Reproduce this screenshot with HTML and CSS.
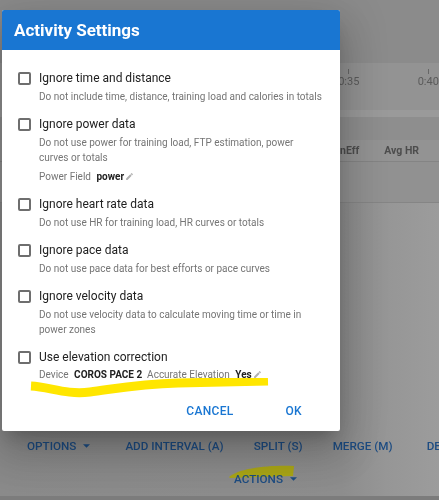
FILE: index.html
```html
<!DOCTYPE html>
<html lang="en">
<head>
<meta charset="utf-8">
<title>Activity Settings</title>
<link rel="stylesheet" href="styles.css">
</head>
<body>
<div class="page">
  <div class="top-strip"></div>
  <div class="axis">
    <div class="tick"><span class="tick-mark"></span><span>0:35</span></div>
    <div class="tick"><span class="tick-mark"></span><span>0:40</span></div>
  </div>
  <div class="band"></div>
  <div class="gap-row"></div>
  <div class="table-head"><span>nEff</span><span>Avg HR</span></div>
  <div class="table-row"></div>
  <div class="lower"></div>
  <div class="bottom-line"></div>
</div>

<svg class="marker marker-b" width="70" height="18" viewBox="0 0 70 18"><path d="M1 14 C 12 5, 40 2, 66 3 L 65 13 L 2 15 Z"/></svg>

<div class="toolbar">
  <span class="tbtn first">OPTIONS <svg class="caret" viewBox="7 10 10 5"><path d="M7 10l5 5 5-5z"/></svg></span>
  <span class="tbtn">ADD INTERVAL (A)</span>
  <span class="tbtn">SPLIT (S)</span>
  <span class="tbtn">MERGE (M)</span>
  <span class="tbtn lastbtn">DELETE</span>
</div>
<div class="toolbar2">
  <span class="tbtn">ACTIONS <svg class="caret" viewBox="7 10 10 5"><path d="M7 10l5 5 5-5z"/></svg></span>
</div>

<div class="dialog">
  <div class="dialog-title">Activity Settings</div>
  <div class="dialog-body">
    <div class="opt">
      <span class="box"></span>
      <div class="txt">
        <div class="label">Ignore time and distance</div>
        <div class="desc">Do not include time, distance, training load and calories in totals</div>
      </div>
    </div>
    <div class="opt">
      <span class="box"></span>
      <div class="txt">
        <div class="label">Ignore power data</div>
        <div class="desc">Do not use power for training load, FTP estimation, power curves or totals</div>
        <div class="field">Power Field <b>power</b><svg class="pencil" viewBox="0 0 24 24"><path d="M20.71 7.04c.39-.39.39-1.04 0-1.41l-2.34-2.34c-.37-.39-1.02-.39-1.41 0l-1.84 1.83 3.75 3.75M3 17.25V21h3.75L17.81 9.93l-3.75-3.75L3 17.25z"/></svg></div>
      </div>
    </div>
    <div class="opt">
      <span class="box"></span>
      <div class="txt">
        <div class="label">Ignore heart rate data</div>
        <div class="desc">Do not use HR for training load, HR curves or totals</div>
      </div>
    </div>
    <div class="opt">
      <span class="box"></span>
      <div class="txt">
        <div class="label">Ignore pace data</div>
        <div class="desc">Do not use pace data for best efforts or pace curves</div>
      </div>
    </div>
    <div class="opt">
      <span class="box"></span>
      <div class="txt">
        <div class="label">Ignore velocity data</div>
        <div class="desc">Do not use velocity data to calculate moving time or time in power zones</div>
      </div>
    </div>
    <div class="opt last">
      <span class="box"></span>
      <div class="txt">
        <div class="label">Use elevation correction</div>
        <div class="field tight">Device <b>COROS PACE 2</b> &nbsp;Accurate Elevation <b>Yes</b><svg class="pencil" viewBox="0 0 24 24"><path d="M20.71 7.04c.39-.39.39-1.04 0-1.41l-2.34-2.34c-.37-.39-1.02-.39-1.41 0l-1.84 1.83 3.75 3.75M3 17.25V21h3.75L17.81 9.93l-3.75-3.75L3 17.25z"/></svg></div>
      </div>
    </div>
  </div>
  <div class="actions">
    <span class="abtn">CANCEL</span>
    <span class="abtn">OK</span>
  </div>
</div>

<svg class="marker marker-a" width="250" height="24" viewBox="0 0 250 24"><path d="M3 8 C 22 9, 38 17, 62 14 S 110 6, 150 5 L 240 3"/></svg>
</body>
</html>
```
FILE: styles.css
```css
* { box-sizing: border-box; }
html, body { margin: 0; padding: 0; }
body {
  width: 439px;
  height: 500px;
  overflow: hidden;
  font-family: Roboto, "Liberation Sans", Arial, sans-serif;
  background: #8f8f8f;
  position: relative;
}
.page { display: flex; flex-direction: column; height: 500px; }
.top-strip { height: 63px; background: #8b8b8b; }
.axis {
  height: 47px;
  background: #939393;
  display: flex;
  padding-left: 338px;
  gap: 58px;
  font-size: 11px;
  color: #5b5b5b;
}
.tick { display: flex; flex-direction: column; align-items: center; width: 22px; padding-top: 6px; }
.tick-mark { width: 1px; height: 5px; background: #666; margin-bottom: 1px; }
.band { height: 7px; background: #9a9a9a; }
.gap-row { height: 23px; background: #8e8e8e; }
.table-head {
  height: 22px;
  background: #939393;
  border-bottom: 1px solid #848484;
  display: flex;
  align-items: center;
  padding-left: 340px;
  gap: 25px;
  font-size: 10.5px;
  font-weight: 700;
  color: #4d4d4d;
}
.table-row { height: 41px; background: #919191; border-bottom: 1px solid #858585; }
.lower {
  flex: 1;
  background: linear-gradient(to right, #8a8a8a 0%, #8d8d8d 78%, #969696 88%, #9c9c9c 100%);
}
.bottom-line { height: 4px; background: #7c7c7c; }

.toolbar {
  position: absolute;
  left: 0; width: 439px; top: 437px;
  display: flex;
  align-items: center;
  padding-left: 27px;
  gap: 30px;
  white-space: nowrap;
  overflow: hidden;
}
.toolbar2 {
  position: absolute;
  left: 234px; top: 468px;
}
.tbtn {
  flex: none;
  font-size: 11.7px;
  font-weight: 500;
  color: #1d4c82;
  display: inline-flex;
  align-items: center;
  height: 18px;
}
.tbtn.first { margin-right: 5px; }
.tbtn.lastbtn { margin-left: 4px; }
.caret { width: 7px; height: 4px; margin-left: 7px; fill: #1d4c82; }

.dialog {
  position: absolute;
  left: 2px; top: 10px;
  width: 338px;
  height: 421px;
  background: #fff;
  border-radius: 2px;
  box-shadow: 0 11px 15px -7px rgba(0,0,0,.2), 0 24px 38px 3px rgba(0,0,0,.14), 0 9px 46px 8px rgba(0,0,0,.12);
  display: flex;
  flex-direction: column;
}
.dialog-title {
  height: 40px;
  background: #1976d2;
  color: #fff;
  font-size: 17px;
  font-weight: 700;
  line-height: 40px;
  padding-left: 12px;
  border-radius: 2px 2px 0 0;
}
.dialog-body { padding: 18px 15px 0 16px; }
.opt { display: flex; gap: 8px; margin-bottom: 10px; }
.opt.last { margin-bottom: 0; }
.box {
  flex: none;
  width: 13px; height: 13px;
  margin-top: 4px;
  border: 2px solid #6e6e6e;
  border-radius: 2px;
}
.txt { flex: 1; }
.label { font-size: 12px; line-height: 20px; color: #212121; }
.desc { font-size: 10px; line-height: 15px; color: #757575; margin-top: 1px; }
.field { font-size: 10px; line-height: 15px; color: #757575; margin-top: 4px; display: flex; align-items: center; white-space: pre; }
.field.tight { margin-top: 0; }
.field b { color: #212121; font-weight: 700; margin-left: 3px; }
.pencil { width: 9px; height: 9px; fill: #b0b0b0; margin-left: 1px; }
.actions {
  margin-top: 11px;
  height: 36px;
  display: flex;
  justify-content: flex-end;
  align-items: center;
  gap: 20px;
  padding-right: 22px;
}
.abtn {
  font-size: 12px;
  font-weight: 500;
  color: #1976d2;
  padding: 0 16px;
  letter-spacing: 0.3px;
}

.marker { position: absolute; }
.marker-a { left: 28px; top: 378px; mix-blend-mode: multiply; }
.marker-a path { fill: none; stroke: #ffe600; stroke-width: 9; }
.marker-b { left: 228px; top: 463px; }
.marker-b path { fill: #aaa616; }
```
